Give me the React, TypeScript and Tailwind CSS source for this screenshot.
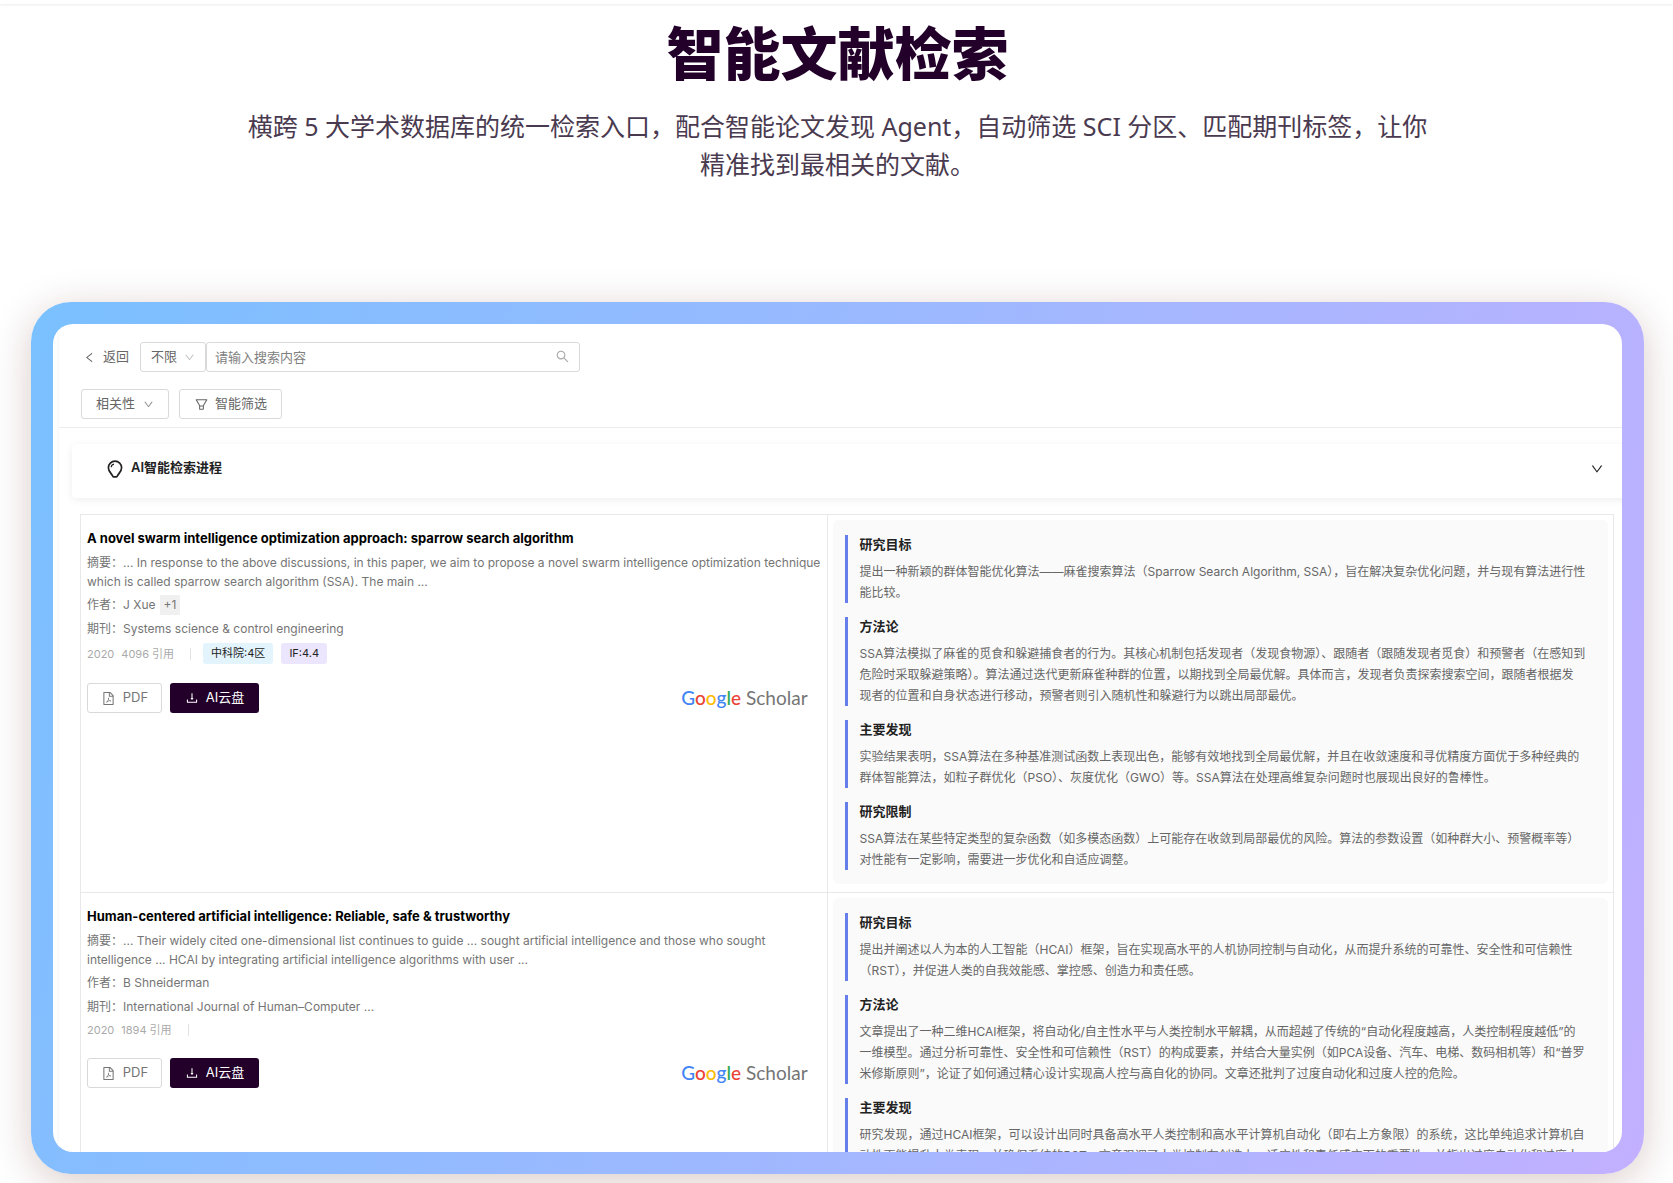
import {
  AiOutlineDown,
  AiOutlineDownload,
  AiOutlineFilePdf,
  AiOutlineFilter,
  AiOutlineLeft,
  AiOutlineSearch,
} from "react-icons/ai";

type Section = { title: string; lines: string[] };

type Paper = {
  title: string;
  abstract: string[];
  author: string;
  more?: string;
  journal: string;
  year: string;
  cited: string;
  zone?: string;
  factor?: string;
  sections: Section[];
};

const papers: Paper[] = [
  {
    title:
      "A novel swarm intelligence optimization approach: sparrow search algorithm",
    abstract: [
      "... In response to the above discussions, in this paper, we aim to propose a novel swarm intelligence optimization technique",
      "which is called sparrow search algorithm (SSA). The main ...",
    ],
    author: "J Xue",
    more: "+1",
    journal: "Systems science & control engineering",
    year: "2020",
    cited: "4096 引用",
    zone: "中科院:4区",
    factor: "IF:4.4",
    sections: [
      {
        title: "研究目标",
        lines: [
          "提出一种新颖的群体智能优化算法——麻雀搜索算法（Sparrow Search Algorithm, SSA），旨在解决复杂优化问题，并与现有算法进行性",
          "能比较。",
        ],
      },
      {
        title: "方法论",
        lines: [
          "SSA算法模拟了麻雀的觅食和躲避捕食者的行为。其核心机制包括发现者（发现食物源）、跟随者（跟随发现者觅食）和预警者（在感知到",
          "危险时采取躲避策略）。算法通过迭代更新麻雀种群的位置，以期找到全局最优解。具体而言，发现者负责探索搜索空间，跟随者根据发",
          "现者的位置和自身状态进行移动，预警者则引入随机性和躲避行为以跳出局部最优。",
        ],
      },
      {
        title: "主要发现",
        lines: [
          "实验结果表明，SSA算法在多种基准测试函数上表现出色，能够有效地找到全局最优解，并且在收敛速度和寻优精度方面优于多种经典的",
          "群体智能算法，如粒子群优化（PSO）、灰度优化（GWO）等。SSA算法在处理高维复杂问题时也展现出良好的鲁棒性。",
        ],
      },
      {
        title: "研究限制",
        lines: [
          "SSA算法在某些特定类型的复杂函数（如多模态函数）上可能存在收敛到局部最优的风险。算法的参数设置（如种群大小、预警概率等）",
          "对性能有一定影响，需要进一步优化和自适应调整。",
        ],
      },
    ],
  },
  {
    title: "Human-centered artificial intelligence: Reliable, safe & trustworthy",
    abstract: [
      "... Their widely cited one-dimensional list continues to guide ... sought artificial intelligence and those who sought",
      "intelligence ... HCAI by integrating artificial intelligence algorithms with user ...",
    ],
    author: "B Shneiderman",
    journal: "International Journal of Human–Computer ...",
    year: "2020",
    cited: "1894 引用",
    sections: [
      {
        title: "研究目标",
        lines: [
          "提出并阐述以人为本的人工智能（HCAI）框架，旨在实现高水平的人机协同控制与自动化，从而提升系统的可靠性、安全性和可信赖性",
          "（RST），并促进人类的自我效能感、掌控感、创造力和责任感。",
        ],
      },
      {
        title: "方法论",
        lines: [
          "文章提出了一种二维HCAI框架，将自动化/自主性水平与人类控制水平解耦，从而超越了传统的“自动化程度越高，人类控制程度越低”的",
          "一维模型。通过分析可靠性、安全性和可信赖性（RST）的构成要素，并结合大量实例（如PCA设备、汽车、电梯、数码相机等）和“普罗",
          "米修斯原则”，论证了如何通过精心设计实现高人控与高自化的协同。文章还批判了过度自动化和过度人控的危险。",
        ],
      },
      {
        title: "主要发现",
        lines: [
          "研究发现，通过HCAI框架，可以设计出同时具备高水平人类控制和高水平计算机自动化（即右上方象限）的系统，这比单纯追求计算机自",
          "动性更能提升人类表现，并确保系统的RST。文章强调了人类控制在创造力、适应性和责任感方面的重要性，并指出过度自动化和过度人",
        ],
      },
    ],
  },
];

function BulbIcon() {
  return (
    <svg width="16" height="18" viewBox="0 0 16 18" fill="none">
      <path
        d="M5.400 15.600C4.600 13.400 1.400 11.800 1.400 7.700C1.400 3.900 4.300 1.200 8 1.200s6.600 2.700 6.600 6.500c0 4.100-3.200 5.700-4 7.900c-.3.900-.6 1.300-1.300 1.300H6.700c-.7 0-1-.4-1.300-1.300z"
        stroke="#222"
        strokeWidth="1.700"
        strokeLinejoin="round"
      />
      <path d="M4.200 7.200C4.300 5.500 5.400 4.400 7 4.100" stroke="#222" strokeWidth="1.200" />
    </svg>
  );
}

function ScholarLogo() {
  return (
    <a
      href="#scholar"
      className="font-['Lato','Liberation_Sans',sans-serif] text-[19px] leading-[30px] text-[#757575]"
    >
      <span className="font-medium">
        <span className="text-[#4285f4]">G</span>
        <span className="text-[#ea4335]">o</span>
        <span className="text-[#fbbc05]">o</span>
        <span className="text-[#4285f4]">g</span>
        <span className="text-[#34a853]">l</span>
        <span className="text-[#ea4335]">e</span>
      </span>{" "}
      Scholar
    </a>
  );
}

function Toolbar() {
  return (
    <div className="flex flex-col gap-[17px] border-b border-[#ececec] pt-[18px] pb-2 pl-[22px] text-[13px] text-[#666]">
      <div className="flex items-center">
        <button className="flex w-[59px] items-center gap-[7px] pl-[2px]">
          <AiOutlineLeft size={13} />
          返回
        </button>
        <label className="relative flex">
          <select
            aria-label="范围"
            className="h-[30px] w-[66px] appearance-none rounded-[3px] border border-[#d9d9d9] bg-white pl-[10px]"
          >
            <option>不限</option>
          </select>
          <AiOutlineDown
            size={11}
            className="pointer-events-none absolute top-[10px] right-[11px] text-[#bbb]"
          />
        </label>
        <label className="relative flex">
          <input
            type="text"
            aria-label="搜索"
            placeholder="请输入搜索内容"
            className="h-[30px] w-[374px] rounded-[3px] border border-[#d9d9d9] bg-white px-2 placeholder:text-[#808080]"
          />
          <AiOutlineSearch
            size={15}
            className="absolute top-[7px] right-[10px] text-[#aaa]"
          />
        </label>
      </div>
      <div className="flex items-center gap-[10px]">
        <label className="relative flex">
          <select
            aria-label="排序"
            className="h-[30px] w-[88px] appearance-none rounded-[3px] border border-[#d9d9d9] bg-white pl-[14px]"
          >
            <option>相关性</option>
          </select>
          <AiOutlineDown
            size={11}
            className="pointer-events-none absolute top-[10px] right-[15px] text-[#888]"
          />
        </label>
        <button className="flex h-[30px] w-[103px] items-center justify-center gap-[6px] rounded-[3px] border border-[#d9d9d9]">
          <AiOutlineFilter size={15} />
          智能筛选
        </button>
      </div>
    </div>
  );
}

function PaperInfo({ paper }: { paper: Paper }) {
  return (
    <div className="flex flex-col px-[6px] pt-[13px] text-[12px] text-[#757575]">
      <h3 className="text-[13px] leading-5 font-bold whitespace-nowrap text-black">
        {paper.title}
      </h3>
      <p className="mt-[5px] leading-[19px] whitespace-nowrap">
        摘要：{paper.abstract[0]}
        <br />
        {paper.abstract[1]}
      </p>
      <p className="mt-1 flex leading-5">
        作者：{paper.author}
        {paper.more && (
          <span className="ml-1 bg-[#f0f0f0] px-1">{paper.more}</span>
        )}
      </p>
      <p className="mt-1 leading-5">期刊：{paper.journal}</p>
      <div className="mt-1 flex items-center text-[11px] leading-[18px] text-[#aaa]">
        <span>{paper.year}</span>
        <span className="ml-[7px]">{paper.cited}</span>
        <span className="mr-3 ml-4 h-3 w-px bg-[#e2e2e2]" />
        {paper.zone && (
          <span className="rounded-[3px] bg-[#e3f4fd] px-2 leading-[21px] text-[#222]">
            {paper.zone}
          </span>
        )}
        {paper.factor && (
          <span className="ml-2 rounded-[3px] bg-[#ebe5fd] px-2 leading-[21px] text-[#222]">
            {paper.factor}
          </span>
        )}
      </div>
      <div className="mt-[19px] flex items-center gap-2 text-[13px]">
        <button className="flex h-[30px] w-[75px] items-center justify-center gap-[7px] rounded-[3px] border border-[#d9d9d9]">
          <AiOutlineFilePdf size={15} />
          PDF
        </button>
        <button className="flex h-[30px] w-[89px] items-center justify-center gap-[7px] rounded-[3px] bg-[#22002a] text-white">
          <AiOutlineDownload size={14} />
          AI云盘
        </button>
        <div className="mr-[13px] ml-auto">
          <ScholarLogo />
        </div>
      </div>
    </div>
  );
}

function PaperSummary({ sections }: { sections: Section[] }) {
  return (
    <div className="flex flex-col gap-[14px] rounded-[6px] bg-[#fafafa] px-3 pt-[15px] pb-[14px]">
      {sections.map((s) => (
        <section key={s.title} className="border-l-3 border-[#667eea] pl-3">
          <h4 className="mb-2 text-[13px] leading-[18px] font-semibold text-[#222]">
            {s.title}
          </h4>
          <p className="text-[12px] leading-[21px] whitespace-nowrap text-[#666]">
            {s.lines.map((line) => (
              <span key={line} className="block">
                {line}
              </span>
            ))}
          </p>
        </section>
      ))}
    </div>
  );
}

function App() {
  return (
    <div className="overflow-hidden bg-white font-['Inter','Noto_Sans_CJK_SC',sans-serif]">
      <header className="h-1 bg-white shadow-[0_1px_3px_rgba(0,0,0,0.08)]" />
      <main className="pr-[29px] pb-[10px] pl-[31px]">
        <div className="mx-auto flex max-w-[1196px] flex-col items-center pt-[14px] text-center font-['Noto_Sans','Noto_Sans_CJK_SC',sans-serif]">
          <h1 className="text-[57px] leading-[70px] font-black text-[#22002a]">
            智能文献检索
          </h1>
          <p className="mt-[19px] text-[25px] leading-[38px] text-[#4a3a50]">
            横跨 5 大学术数据库的统一检索入口，配合智能论文发现
            Agent，自动筛选 SCI 分区、匹配期刊标签，让你精准找到最相关的文献。
          </p>
        </div>

        <div className="mt-[119px] rounded-[40px] bg-[linear-gradient(107deg,#7ac0ff,#c2b0ff)] p-[22px] shadow-[0_8px_40px_rgba(80,25,0,0.22)]">
          <div className="aspect-[1569/828] overflow-hidden rounded-[20px] bg-white pl-1">
            <div className="border-l-2 border-[#fafafa]">
              <Toolbar />
              <button
                aria-expanded="false"
                className="mt-4 ml-[13px] flex h-[54px] w-full items-center rounded-[4px] pr-[31px] pb-1 pl-[35px] text-[13px] font-semibold text-[#222] shadow-[0_2px_8px_rgba(0,0,0,0.07)]"
              >
                <BulbIcon />
                <span className="mb-[2px] ml-2">AI智能检索进程</span>
                <AiOutlineDown size={14} className="ml-auto" />
              </button>
              <div className="mt-4 mr-2 ml-[21px]">
                <table className="w-full table-fixed border-collapse">
                  <colgroup>
                    <col className="w-[48.7%]" />
                    <col />
                  </colgroup>
                  <tbody>
                    {papers.map((paper) => (
                      <tr key={paper.title}>
                        <td className="border border-[#e8e8e8] p-0 align-top">
                          <PaperInfo paper={paper} />
                        </td>
                        <td className="border border-[#e8e8e8] px-[5px] pt-[5px] pb-2 align-top">
                          <PaperSummary sections={paper.sections} />
                        </td>
                      </tr>
                    ))}
                  </tbody>
                </table>
              </div>
            </div>
          </div>
        </div>
      </main>
    </div>
  );
}

export default App;
